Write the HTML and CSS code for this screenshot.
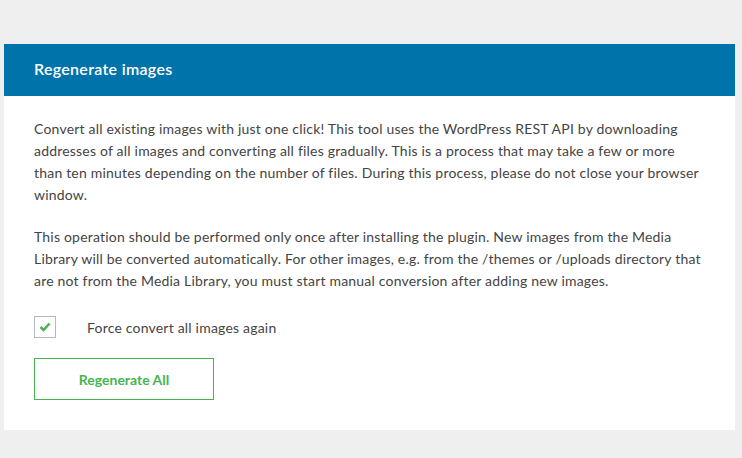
FILE: index.html
```html
<!DOCTYPE html>
<html lang="en">
<head>
    <meta charset="UTF-8">
    <meta name="viewport" content="width=device-width, initial-scale=1.0">
    <title>Regenerate images</title>
    <link rel="stylesheet" href="styles.css">
</head>
<body>
    <div class="widget">
        <div class="widget-header">Regenerate images</div>
        <div class="widget-content">
            <p>Convert all existing images with just one click! This tool uses the WordPress REST API by downloading addresses of all images and converting all files gradually. This is a process that may take a few or more than ten minutes depending on the number of files. During this process, please do not close your browser window.</p>
            <p>This operation should be performed only once after installing the plugin. New images from the Media Library will be converted automatically. For other images, e.g. from the /themes or /uploads directory that are not from the Media Library, you must start manual conversion after adding new images.</p>
            <label class="check">
                <input type="checkbox" checked>
                <span class="check-box">
                    <svg width="12" height="10" viewBox="0 0 12 10"><path d="M1.5 5 L4.6 8 L10.5 1.5" fill="none" stroke="#46b450" stroke-width="2.6"/></svg>
                </span>
                <span class="check-label">Force convert all images again</span>
            </label>
            <button class="btn">Regenerate All</button>
        </div>
    </div>
</body>
</html>
```

FILE: styles.css
```css
*{
    margin: 0;
    padding: 0;
    box-sizing: border-box;
}
body{
    background-color: #efefef;
    font-family: Lato, "Open Sans", sans-serif;
    letter-spacing: 0.2px;
    color: #444;
    padding: 44px 7px 0 4px;
}
.widget{
    background-color: #fff;
}
.widget-header{
    height: 52px;
    background-color: #0073aa;
    color: #fff;
    font-size: 16px;
    font-weight: 600;
    letter-spacing: 0.3px;
    padding: 0 0 3px 30px;
    display: flex;
    align-items: center;
}
.widget-content{
    padding: 22px 30px 30px;
}
.widget-content p{
    font-size: 14px;
    line-height: 22px;
    margin-bottom: 20px;
}
.check{
    display: flex;
    align-items: center;
    margin-top: 24px;
    cursor: pointer;
}
.check input{
    display: none;
}
.check-box{
    width: 22px;
    height: 22px;
    border: 1px solid #b4b9be;
    display: flex;
    align-items: center;
    justify-content: center;
}
.check-label{
    font-size: 14px;
    margin-left: 31px;
}
.btn{
    display: block;
    margin-top: 20px;
    width: 180px;
    height: 42px;
    background-color: #fff;
    border: 1px solid #46b450;
    color: #46b450;
    font-family: inherit;
    font-size: 14px;
    font-weight: 700;
    cursor: pointer;
}
```
